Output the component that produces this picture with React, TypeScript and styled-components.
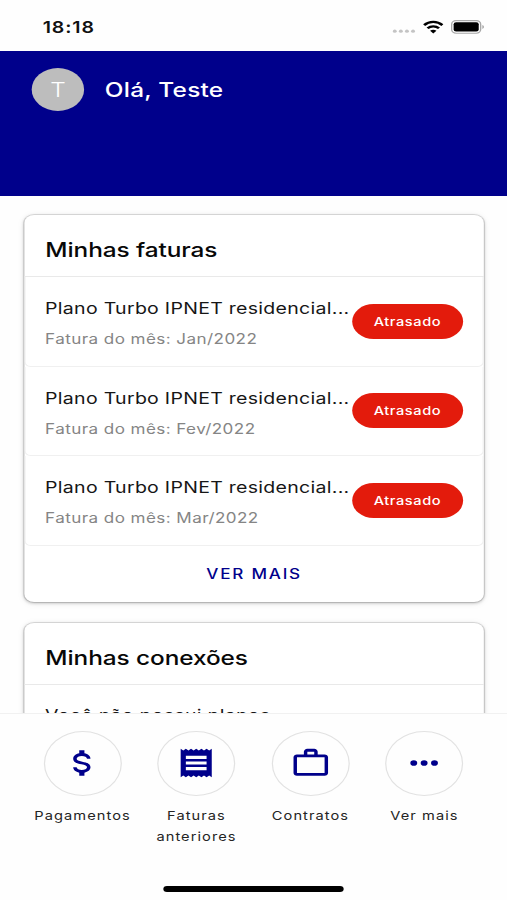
import React from "react";
import styled, { createGlobalStyle } from "styled-components";

const NAVY = "#00008b";

const GlobalStyle = createGlobalStyle`
  html, body { margin: 0; background: #fff; overflow: hidden; }
  *, *::before, *::after { box-sizing: border-box; }
`;

/* The phone layout is 416 units wide and stretched to fill a 507px window. */
const Screen = styled.main`
  width: 416px;
  height: 900px;
  display: flex;
  flex-direction: column;
  overflow: hidden;
  transform: scaleX(1.21875);
  transform-origin: 0 0;
  background: #fefefe;
  color: #111;
  font-family: Inter, "Liberation Sans", sans-serif;
`;

const StatusBar = styled.header`
  flex: none;
  height: 51px;
  padding: 3px 18.5px 0 35px;
  display: flex;
  align-items: center;
  justify-content: space-between;
`;

const Clock = styled.span`
  font-size: 16px;
  font-weight: 600;
  letter-spacing: 0.75px;
`;

const StatusIcons = styled.div`
  display: flex;
  align-items: center;
  gap: 6px;
`;

const Greeting = styled.section`
  flex: none;
  height: 144.5px;
  padding: 17px 26px;
  display: flex;
  align-items: flex-start;
  gap: 17px;
  background: ${NAVY};
  color: #fff;
`;

const Avatar = styled.div`
  width: 43px;
  height: 43px;
  border-radius: 50%;
  background: #bdbdbd;
  display: grid;
  place-items: center;
  font-size: 20px;
  font-weight: 300;
`;

const Hello = styled.h1`
  margin: 0;
  font-size: 20px;
  font-weight: 500;
  line-height: 45px;
  letter-spacing: 0.2px;
`;

const Content = styled.div`
  flex: 1;
  min-height: 0;
  overflow: hidden;
  padding: 19px 19px 0 20px;
  display: flex;
  flex-direction: column;
  gap: 21px;
`;

const Card = styled.section`
  flex: none;
  background: #fff;
  border-radius: 8px;
  box-shadow: 0 0 0 1px rgba(0, 0, 0, 0.1), 0 1px 3px rgba(0, 0, 0, 0.28),
    0 1px 8px rgba(0, 0, 0, 0.06);
`;

const CardTitle = styled.h2`
  margin: 0;
  height: 62.5px;
  padding: 9px 17.2px 0;
  border-bottom: 1px solid #e9e9e9;
  display: flex;
  align-items: center;
  font-size: 20px;
  font-weight: 500;
  letter-spacing: -0.06px;
  color: #080808;
`;

const Invoice = styled.article`
  height: 89.6px;
  padding: 0 16.2px 0 16px;
  border: 1px solid #f0f0f0;
  border-top: 0;
  border-radius: 0 0 5px 5px;
  display: flex;
  align-items: center;
  justify-content: space-between;
`;

const InvoiceText = styled.div`
  white-space: nowrap;
  padding-top: 4.8px;
`;

const PlanName = styled.p`
  margin: 0;
  font-size: 16px;
  line-height: 30px;
  letter-spacing: 0.24px;
  color: #161616;
`;

const Month = styled(PlanName)`
  line-height: 31px;
  font-size: 14px;
  letter-spacing: 0.35px;
  color: #858585;
`;

const Status = styled.span`
  flex: none;
  width: 91px;
  height: 35px;
  border-radius: 18px;
  background: #e31b0c;
  color: #fff;
  display: grid;
  place-items: center;
  font-size: 12px;
  font-weight: 500;
  letter-spacing: 0.47px;
`;

const MoreButton = styled.button`
  display: block;
  width: 100%;
  height: 55.8px;
  padding: 0;
  border: 0;
  background: none;
  color: ${NAVY};
  font: 500 14px Inter, sans-serif;
  letter-spacing: 1.45px;
`;

const Empty = styled(PlanName)`
  padding: 14.8px 17px;
`;

const Navigation = styled.nav`
  flex: none;
  height: 187px;
  padding: 17px 21px 0;
  border-top: 1px solid #f1f1f1;
  background: #fefefe;
  display: flex;
  flex-direction: column;
  justify-content: space-between;
`;

const Actions = styled.div`
  display: grid;
  grid-template-columns: repeat(4, 1fr);
`;

const Action = styled.a`
  display: flex;
  flex-direction: column;
  align-items: center;
  gap: 9.5px;
  font-size: 12px;
  line-height: 21px;
  letter-spacing: 0.87px;
  text-align: center;
  color: #242424;
`;

const IconCircle = styled.span`
  width: 64px;
  height: 64.5px;
  border: 1px solid #e2e2e2;
  border-radius: 50%;
  display: grid;
  place-items: center;
  color: ${NAVY};
`;

const HomeIndicator = styled.div`
  width: 148px;
  height: 5.5px;
  margin: 0 auto 8.5px;
  border-radius: 3px;
  background: #000;
`;

const invoices = ["Jan/2022", "Fev/2022", "Mar/2022"];

const actions = [
  {
    label: "Pagamentos",
    viewBox: "0.6 0 24 24",
    path: "M7,15H9C9,16.08 10.37,17 12,17C13.63,17 15,16.08 15,15C15,13.9 13.96,13.5 11.76,12.97C9.64,12.44 7,11.78 7,9C7,7.21 8.47,5.69 10.5,5.18V3H13.5V5.18C15.53,5.69 17,7.21 17,9H15C15,7.92 13.63,7 12,7C10.37,7 9,7.92 9,9C9,10.1 10.04,10.5 12.24,11.03C14.36,11.56 17,12.22 17,15C17,16.79 15.53,18.31 13.5,18.82V21H10.5V18.82C8.47,18.31 7,16.79 7,15Z",
  },
  {
    label: "Faturas anteriores",
    viewBox: "0 0 24 24",
    path: "M18 17.2H6v-2.3h12v2.3zm0-4.1H6v-2.2h12v2.2zm0-4H6V6.8h12v2.3zM3 22l1.5-1.1L6 22l1.5-1.1L9 22l1.5-1.1L12 22l1.5-1.1L15 22l1.5-1.1L18 22l1.5-1.1L21 22V2l-1.5 1.1L18 2l-1.5 1.1L15 2l-1.5 1.1L12 2l-1.5 1.1L9 2 7.5 3.1 6 2 4.5 3.1 3 2v20z",
  },
  {
    label: "Contratos",
    viewBox: "0 0 24 24",
    path: "M20,6C20.58,6 21.05,6.2 21.42,6.59C21.8,7 22,7.45 22,8V19C22,19.55 21.8,20 21.42,20.41C21.05,20.8 20.58,21 20,21H4C3.42,21 2.95,20.8 2.58,20.41C2.2,20 2,19.55 2,19V8C2,7.45 2.2,7 2.58,6.59C2.95,6.2 3.42,6 4,6H8V4C8,3.42 8.2,2.95 8.58,2.58C8.95,2.2 9.42,2 10,2H14C14.58,2 15.05,2.2 15.42,2.58C15.8,2.95 16,3.42 16,4V6H20M4,8V19H20V8H4M14,6V4H10V6H14Z",
  },
  {
    label: "Ver mais",
    viewBox: "0 0 24 24",
    path: "M6 10a2 2 0 1 0 0 4 2 2 0 0 0 0-4zM12 10a2 2 0 1 0 0 4 2 2 0 0 0 0-4zM18 10a2 2 0 1 0 0 4 2 2 0 0 0 0-4z",
  },
];

function Signal() {
  return (
    <svg width="19" height="14" viewBox="0 0 19 14" fill="#c4c4c4">
      <circle cx="1.9" cy="11.2" r="1.6" />
      <circle cx="6.9" cy="11.2" r="1.6" />
      <circle cx="11.9" cy="11.2" r="1.6" />
      <circle cx="16.9" cy="11.2" r="1.6" />
    </svg>
  );
}

function Wifi() {
  return (
    <svg width="17" height="14" viewBox="0 0 17 14" fill="none" stroke="#000" strokeWidth="2.3">
      <path d="M1 5.1c4.2-4.3 10.8-4.3 15 0" />
      <path d="M3.8 8.3c2.7-2.7 6.7-2.7 9.4 0" />
      <path d="M8.5 13.4 5.9 10.8c1.4-1.5 3.8-1.5 5.2 0z" fill="#000" stroke="none" />
    </svg>
  );
}

function Battery() {
  return (
    <svg width="28" height="14" viewBox="0 0 28 14">
      <rect x="0.6" y="0.6" width="23.8" height="12.6" rx="3.6" fill="none" stroke="#a8a8a8" strokeWidth="1.1" />
      <rect x="2.2" y="2.2" width="20.6" height="9.4" rx="2" fill="#000" />
      <path d="M25.8 5c1.7.7 1.7 3.2 0 3.9z" fill="#a0a0a0" />
    </svg>
  );
}

export default function App() {
  return (
    <>
      <GlobalStyle />
      <Screen>
        <StatusBar>
          <Clock>18:18</Clock>
          <StatusIcons>
            <Signal />
            <Wifi />
            <Battery />
          </StatusIcons>
        </StatusBar>
        <Greeting>
          <Avatar>T</Avatar>
          <Hello>Olá, Teste</Hello>
        </Greeting>
        <Content>
          <Card>
            <CardTitle>Minhas faturas</CardTitle>
            {invoices.map((month) => (
              <Invoice key={month}>
                <InvoiceText>
                  <PlanName>Plano Turbo IPNET residencial...</PlanName>
                  <Month>Fatura do mês: {month}</Month>
                </InvoiceText>
                <Status>Atrasado</Status>
              </Invoice>
            ))}
            <MoreButton>VER MAIS</MoreButton>
          </Card>
          <Card>
            <CardTitle>Minhas conexões</CardTitle>
            <Empty>Você não possui planos</Empty>
          </Card>
        </Content>
        <Navigation>
          <Actions>
            {actions.map(({ label, viewBox, path }) => (
              <Action key={label}>
                <IconCircle>
                  <svg width="34" height="34" viewBox={viewBox} fill="currentColor">
                    <path d={path} />
                  </svg>
                </IconCircle>
                {label}
              </Action>
            ))}
          </Actions>
          <HomeIndicator />
        </Navigation>
      </Screen>
    </>
  );
}
